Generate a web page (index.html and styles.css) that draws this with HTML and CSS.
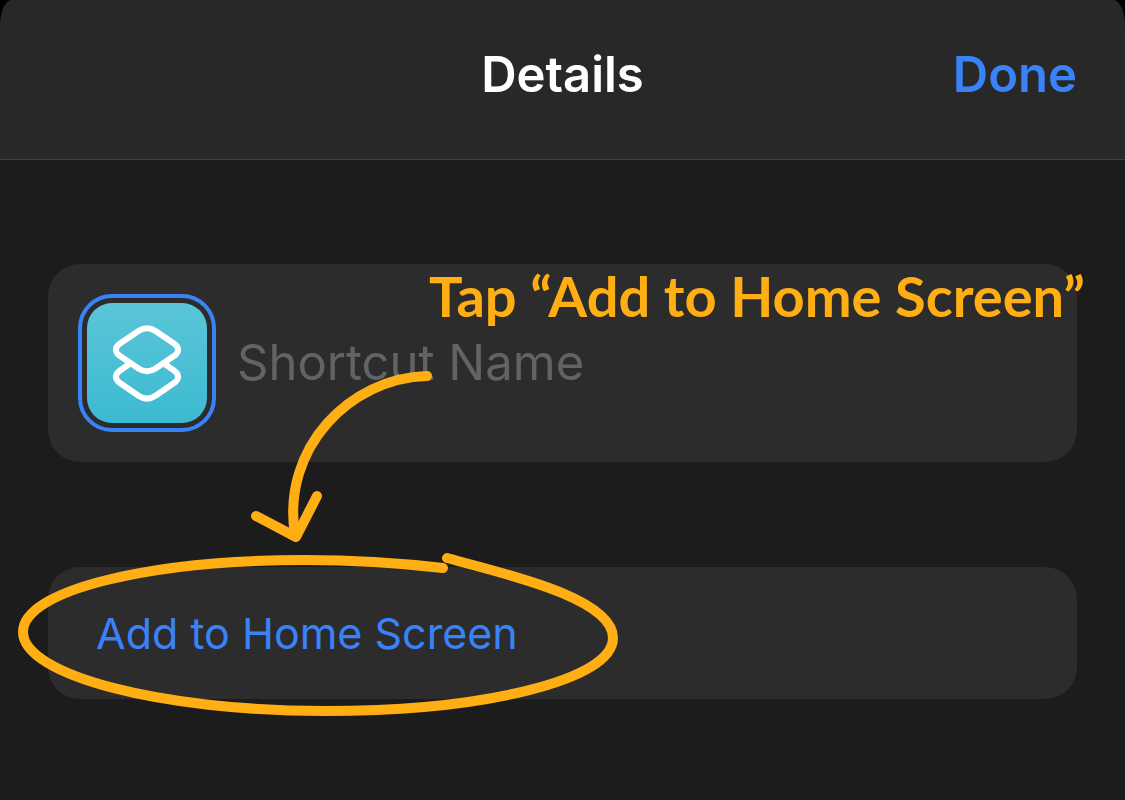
FILE: index.html
```html
<!DOCTYPE html>
<html lang="en">

<head>
  <meta charset="UTF-8">
  <meta name="viewport" content="width=device-width, initial-scale=1.0">
  <title>Details</title>
  <link rel="stylesheet" href="styles.css">
</head>

<body>

  <div class="sheet">
    <header class="nav">
      <h1 class="title">Details</h1>
      <button type="button" class="done">Done</button>
    </header>

    <main class="content">
      <div class="card name-card">
        <button type="button" class="icon-btn" aria-label="Shortcut icon">
          <span class="tile">
            <svg width="120" height="120" viewBox="0 0 120 120" fill="none" stroke="#fff" stroke-width="6">
              <path d="M51.500 28L33 40.500C27.500 44.200 27.500 49.300 33 53L51.500 65.500Q60 71 68.500 65.500L87 53C92.500 49.300 92.500 44.200 87 40.500L68.500 28Q60 22.500 51.500 28Z" />
              <path d="M43 60.500L33 67.500C27.500 71.200 27.500 76.300 33 80L51.500 92.800Q60 98.500 68.500 92.800L87 80C92.500 76.300 92.500 71.200 87 67.500L77 60.500" />
            </svg>
          </span>
        </button>
        <input type="text" class="name-input" placeholder="Shortcut Name" aria-label="Shortcut Name">
      </div>

      <button type="button" class="card add-btn">Add to Home Screen</button>
    </main>

    <!-- hand drawn hints -->
    <div class="hint">
      <p class="hint-text">Tap “Add to Home Screen”</p>
      <svg class="hint-lines" width="640" height="740" viewBox="0 0 640 740">
        <path d="M427 376C350 378 281 448 295 535" />
        <path d="M256 516L296 537L317 496" />
        <path d="M447 558C500 573 613 597 613 638C613 681 480 711 325 711C160 711 23 675 23 632C23 590 150 560 305 560C355 560 400 563 443 568" />
      </svg>
    </div>
  </div>

</body>

</html>
```
FILE: styles.css
```css
* {
  margin: 0;
  padding: 0;
  box-sizing: border-box;
}

body {
  min-height: 100vh;
  background: #000;
  color: #fff;
  font-family: Inter, "Liberation Sans", sans-serif;
}

button,
input {
  border: none;
  outline: none;
  background: none;
  color: inherit;
  font-family: inherit;
}

button {
  cursor: pointer;
}

.sheet {
  position: relative;
  min-height: 100vh;
  background: #1c1c1c;
  border-radius: 12px 12px 0 0 / 26px 26px 0 0;
  overflow: hidden;
}

.nav {
  display: grid;
  grid-template-columns: 1fr auto 1fr;
  align-items: start;
  height: 160px;
  padding: 45px 48px 0;
  background: #282828;
  border-bottom: 1px solid #414141;
}

.title,
.done {
  font-size: 49px;
  font-weight: 600;
  line-height: 60px;
}

.title {
  grid-column: 2;
}

.done {
  justify-self: end;
  color: #3a82f7;
}

.content {
  display: flex;
  flex-direction: column;
  gap: 105px;
  padding: 104px 48px;
}

.card {
  background: #2c2c2c;
  border-radius: 32px;
}

.name-card {
  display: flex;
  align-items: center;
  gap: 21px;
  padding: 30px;
}

.icon-btn {
  flex: none;
  padding: 5px;
  border: 4px solid #3a82f7;
  border-radius: 34px;
}

.tile {
  display: block;
  height: 120px;
  border-radius: 25px;
  background: linear-gradient(#5bc5d8, #3cbad1);
}

.tile svg {
  display: block;
}

.name-input {
  flex: 1;
  min-width: 0;
  font-size: 49px;
  line-height: 60px;
}

.name-input::placeholder {
  color: #636366;
  opacity: 1;
}

.add-btn {
  padding: 36px 48px;
  color: #3a82f7;
  font-size: 43px;
  line-height: 60px;
  text-align: left;
}

.hint {
  position: absolute;
  top: 0;
  left: 0;
  pointer-events: none;
}

.hint-text {
  position: absolute;
  top: 266px;
  left: 429px;
  color: #ffae14;
  font-family: Lato, sans-serif;
  font-size: 56px;
  font-weight: 700;
  line-height: 60px;
  white-space: nowrap;
}

.hint-lines {
  display: block;
  fill: none;
  stroke: #ffae14;
  stroke-width: 10;
  stroke-linecap: round;
  stroke-linejoin: round;
}
```
